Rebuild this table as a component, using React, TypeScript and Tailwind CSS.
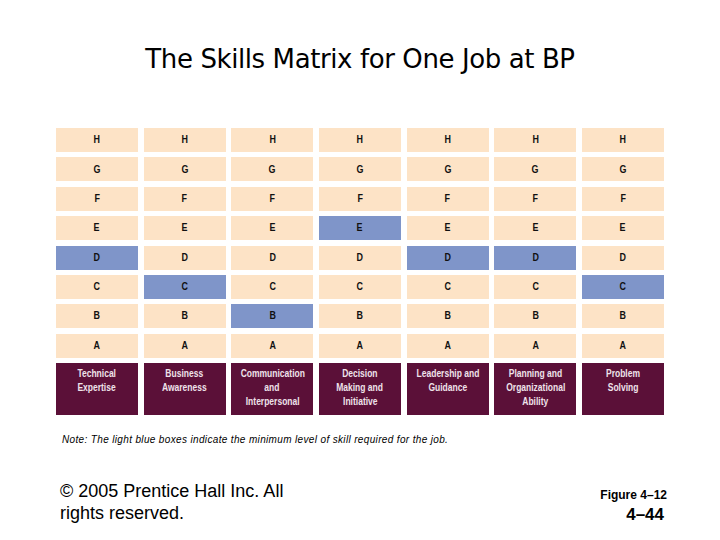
import React from "react";

const levels = ["H", "G", "F", "E", "D", "C", "B", "A"];
const highlight = ["D", "C", "B", "E", "D", "D", "C"];
const labels = [
  ["Technical", "Expertise"],
  ["Business", "Awareness"],
  ["Communication", "and", "Interpersonal"],
  ["Decision", "Making and", "Initiative"],
  ["Leadership and", "Guidance"],
  ["Planning and", "Organizational", "Ability"],
  ["Problem", "Solving"],
];

export default function App() {
  return (
    <div className="w-[720px] h-[540px] bg-white relative overflow-hidden">
      <div className="pt-[41px] h-[128px] text-center">
        <h1
          className="text-[26px] leading-[36px] text-black tracking-[-0.4px]"
          style={{ fontFamily: '"DejaVu Sans", sans-serif' }}
        >
          The Skills Matrix for One Job at BP
        </h1>
      </div>
      <div className="ml-[56px] w-[608px] grid grid-cols-7 gap-x-[5.7px] gap-y-[5.4px]">
        {levels.map((lv) =>
          highlight.map((h, ci) => (
            <div
              key={lv + ci}
              className={`h-[24px] flex items-center justify-center text-[10.5px] font-bold text-[#111] ${
                h === lv ? "bg-[#7f95c9]" : "bg-[#fde3c6]"
              }`}
              style={{ fontFamily: '"Liberation Sans", Arial, sans-serif' }}
            >
              <span className="inline-block scale-x-[0.85]">{lv}</span>
            </div>
          ))
        )}
        {labels.map((ls, i) => (
          <div
            key={i}
            className="h-[52px] bg-[#5b1038] flex flex-col items-center pt-[4px] text-[10px] leading-[14px] font-bold text-[#efe2ea]"
            style={{ fontFamily: '"Liberation Sans", Arial, sans-serif' }}
          >
            {ls.map((l) => (
              <span key={l} className="inline-block scale-x-[0.85] whitespace-nowrap">
                {l}
              </span>
            ))}
          </div>
        ))}
      </div>
      <p
        className="ml-[62px] mt-[19px] text-[10px] italic text-black leading-[12px] tracking-[0.35px]"
        style={{ fontFamily: '"Liberation Sans", Arial, sans-serif' }}
      >
        Note: The light blue boxes indicate the minimum level of skill required for the job.
      </p>
      <div className="flex justify-between mt-[34px] ml-[60px] mr-[53px]">
        <p
          className="text-[18px] leading-[22px] text-black w-[240px]"
          style={{ fontFamily: '"Liberation Sans", Arial, sans-serif' }}
        >
          © 2005 Prentice Hall Inc. All rights reserved.
        </p>
        <div
          className="flex flex-col items-end font-bold text-black pt-[8px]"
          style={{ fontFamily: '"Liberation Sans", Arial, sans-serif' }}
        >
          <span className="text-[12px] leading-[14px]">Figure 4–12</span>
          <span className="text-[17px] leading-[26px] pr-[3px]">4–44</span>
        </div>
      </div>
    </div>
  );
}
